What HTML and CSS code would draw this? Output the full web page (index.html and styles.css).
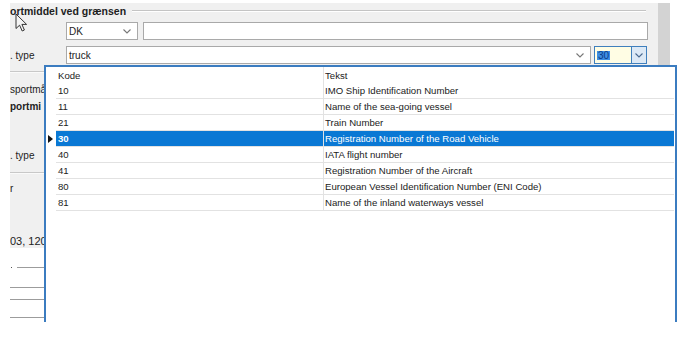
FILE: index.html
```html
<!DOCTYPE html>
<html lang="da">
<head>
    <meta charset="UTF-8">
    <title>Transportmiddel ved grænsen</title>
    <link rel="stylesheet" href="styles.css">
</head>
<body>
<div class="screen">
    <div class="panel-wrap">
        <div class="panel">
            <div class="group-title">
                <span>ortmiddel ved grænsen</span>
                <div class="group-line"></div>
            </div>

            <div class="form-row first">
                <div class="label"></div>
                <div class="combo combo-dk">
                    <span>DK</span>
                    <svg class="chev" width="8" height="5" viewBox="0 0 8 5"><polyline points="0.5,0.5 4,4 7.5,0.5"/></svg>
                </div>
                <div class="textbox"></div>
            </div>

            <div class="form-row">
                <div class="label">. type</div>
                <div class="combo combo-truck">
                    <span>truck</span>
                    <svg class="chev" width="8" height="5" viewBox="0 0 8 5"><polyline points="0.5,0.5 4,4 7.5,0.5"/></svg>
                </div>
                <div class="code-combo">
                    <div class="code-input"><span class="sel">30</span></div>
                    <div class="code-btn">
                        <svg class="chev" width="8" height="5" viewBox="0 0 8 5"><polyline points="0.5,0.5 4,4 7.5,0.5"/></svg>
                    </div>
                </div>
            </div>

            <div class="sep sep-1"></div>
            <div class="side-label l-1">sportmå</div>
            <div class="side-label l-2 bold">portmi</div>
            <div class="side-label l-3">. type</div>
            <div class="sep sep-2"></div>
            <div class="side-label l-4">r</div>
            <div class="side-label l-5">03, 120</div>
        </div>
        <div class="scroll-strip"></div>
    </div>

    <div class="notes">
        <div class="rule rule-1"><i class="dot"></i><b class="line"></b></div>
        <div class="rule rule-2"><b class="line"></b></div>
        <div class="rule rule-3"><b class="line"></b></div>
        <div class="rule rule-4"><b class="line"></b></div>
    </div>

    <!-- dropdown list of the code combo -->
    <div class="popup">
        <div class="grid">
            <div class="grid-row head">
                <div class="rh"></div>
                <div class="cell">Kode</div>
                <div class="cell txt">Tekst</div>
            </div>
            <div class="grid-row">
                <div class="rh"></div>
                <div class="cell">10</div>
                <div class="cell txt">IMO Ship Identification Number</div>
            </div>
            <div class="grid-row">
                <div class="rh"></div>
                <div class="cell">11</div>
                <div class="cell txt">Name of the sea-going vessel</div>
            </div>
            <div class="grid-row">
                <div class="rh"></div>
                <div class="cell">21</div>
                <div class="cell txt">Train Number</div>
            </div>
            <div class="grid-row selected">
                <div class="rh"><i class="arrow"></i></div>
                <div class="cell bold">30</div>
                <div class="cell txt">Registration Number of the Road Vehicle</div>
            </div>
            <div class="grid-row">
                <div class="rh"></div>
                <div class="cell">40</div>
                <div class="cell txt">IATA flight number</div>
            </div>
            <div class="grid-row">
                <div class="rh"></div>
                <div class="cell">41</div>
                <div class="cell txt">Registration Number of the Aircraft</div>
            </div>
            <div class="grid-row">
                <div class="rh"></div>
                <div class="cell">80</div>
                <div class="cell txt">European Vessel Identification Number (ENI Code)</div>
            </div>
            <div class="grid-row">
                <div class="rh"></div>
                <div class="cell">81</div>
                <div class="cell txt">Name of the inland waterways vessel</div>
            </div>
        </div>
    </div>

    <svg class="cursor" width="13" height="20" viewBox="0 0 13 20">
        <path d="M1 1 L1 15.5 L4.6 12.2 L7.2 18 L9.4 17 L6.9 11.4 L11.6 11.4 Z"/>
    </svg>
</div>
</body>
</html>
```

FILE: styles.css
```css
body {
    margin: 0;
    background: #fff;
    font-family: "Liberation Sans", Arial, sans-serif;
    font-size: 10px;
    color: #222;
}

.screen {
    position: relative;
    width: 688px;
    height: 345px;
    overflow: hidden;
}

.panel-wrap {
    display: flex;
    margin: 3px 0 0 10px;
}

.panel {
    width: 648px;
    height: 245px;
    background: #f0f0f0;
    overflow: hidden;
}

.scroll-strip {
    width: 12px;
    height: 245px;
    background: #d3d3d3;
}

.group-title {
    display: flex;
    align-items: center;
    height: 14px;
    padding-top: 1px;
    font-weight: bold;
    font-size: 10.5px;
    color: #1e1e1e;
}

.group-line {
    flex: 1;
    margin: 0 12px 0 6px;
    border-top: 1px solid #c4c4c4;
    border-bottom: 1px solid #fff;
}

.form-row {
    display: flex;
    align-items: center;
    height: 18px;
    margin-top: 6px;
}

.form-row.first {
    margin-top: 4px;
}

.label {
    width: 56px;
    flex-shrink: 0;
    padding-top: 1px;
}

.combo,
.textbox {
    box-sizing: border-box;
    height: 18px;
    background: #fff;
    border: 1px solid #a9a9a9;
}

.combo {
    display: flex;
    align-items: center;
    justify-content: space-between;
    padding: 1px 6px 0 2px;
}

.combo-dk {
    width: 72px;
}

.textbox {
    width: 505px;
    margin-left: 5px;
}

.combo-truck {
    width: 525px;
}

.chev polyline {
    fill: none;
    stroke: #777;
    stroke-width: 1.1;
}

.code-combo {
    display: flex;
    margin-left: 3px;
    height: 18px;
}

.code-input {
    box-sizing: border-box;
    width: 38px;
    height: 18px;
    background: #fffde4;
    border: 1px solid #3f7fbd;
    padding: 3px 0 0 2px;
}

.code-input .sel {
    display: inline-block;
    padding: 0 1px;
    line-height: 9px;
    background: #3d8ee3;
    color: #0d3a85;
}

.code-btn {
    box-sizing: border-box;
    width: 15px;
    height: 18px;
    background: #dce9f6;
    border: 1px solid #3f7fbd;
    border-left: none;
    display: flex;
    align-items: center;
    justify-content: center;
}

.code-btn .chev polyline {
    stroke: #4a6a90;
}

.sep {
    width: 56px;
    border-top: 1px solid #c8c8c8;
    border-bottom: 1px solid #fafafa;
}

.sep-1 {
    margin-top: 7px;
}

.sep-2 {
    margin-top: 8px;
}

.side-label {
    height: 16px;
    line-height: 16px;
    white-space: nowrap;
}

.l-1 { margin-top: 9px; }
.l-2 { margin-top: 1px; }
.l-3 { margin-top: 33px; }
.l-4 { margin-top: 7px; }

.l-5 {
    margin-top: 37px;
    height: 15px;
    line-height: 15px;
    font-size: 11px;
}

.bold {
    font-weight: bold;
}

.notes {
    margin-left: 10px;
}

.rule {
    display: flex;
    align-items: center;
    height: 1px;
}

.rule .line {
    display: block;
    width: 36px;
    height: 1px;
    background: #9c9c9c;
}

.rule-1 {
    margin-top: 19px;
}

.rule-1 .dot {
    display: block;
    width: 1px;
    height: 1px;
    margin: 0 5px 0 1px;
    background: #555;
}

.rule-1 .line {
    width: 30px;
}

.rule-2 { margin-top: 19px; }
.rule-3 { margin-top: 11px; }
.rule-4 { margin-top: 17px; }

/* dropdown list */
.popup {
    position: absolute;
    left: 44px;
    top: 65px;
    box-sizing: border-box;
    width: 633px;
    height: 257px;
    background: #fff;
    border: 2px solid #3b7cc0;
    border-bottom: none;
    font-size: 9.6px;
}

.grid-row {
    display: grid;
    grid-template-columns: 10px 267px 351px;
    height: 16px;
}

.rh {
    display: flex;
    align-items: center;
    padding-left: 2px;
}

.arrow {
    width: 0;
    height: 0;
    border-left: 5px solid #111;
    border-top: 4px solid transparent;
    border-bottom: 4px solid transparent;
}

.cell {
    box-sizing: border-box;
    padding: 1px 0 0 2px;
    line-height: 14px;
    border-bottom: 1px solid #e2e2e2;
    white-space: nowrap;
}

.cell.txt {
    border-left: 1px solid #e2e2e2;
    padding-left: 1px;
}

.head .cell {
    border-bottom: none;
    line-height: 15px;
}

.selected .cell {
    background: #0a78d4;
    color: #fff;
}

.cursor {
    position: absolute;
    left: 15px;
    top: 13px;
}

.cursor path {
    fill: #f4f4f4;
    stroke: #333;
    stroke-width: 1;
}
```
